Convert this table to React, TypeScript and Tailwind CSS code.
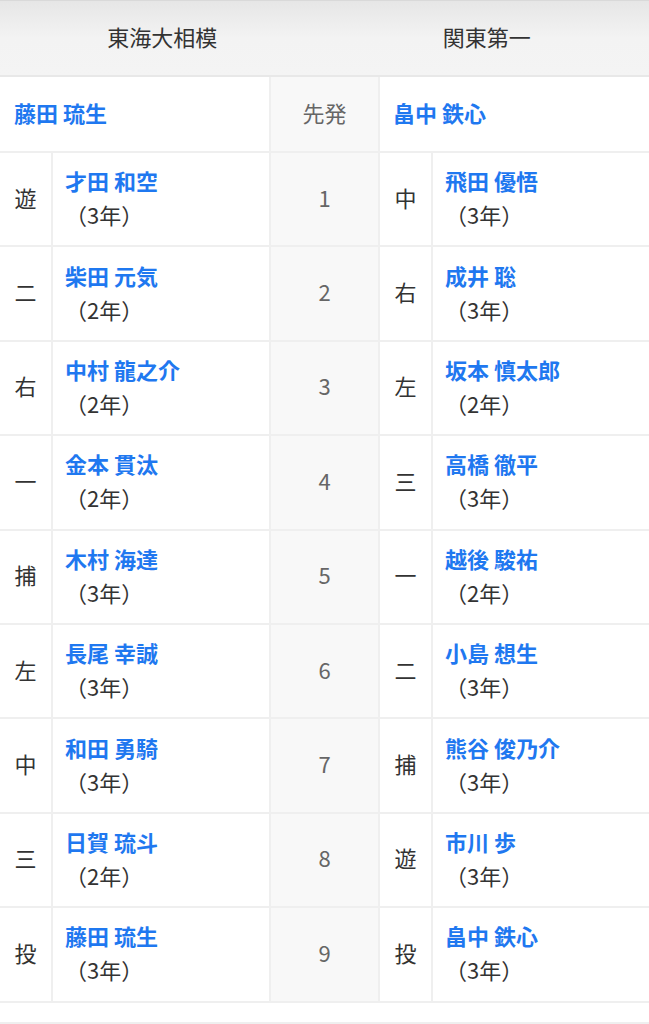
import React, { FC } from 'react';

interface IPlayer {
    pos: string;
    name: string;
    grade: string;
}

interface IRowProps {
    order: number;
    home: IPlayer;
    away: IPlayer;
}

const homeStarter = '藤田 琉生';
const awayStarter = '畠中 鉄心';

const home: IPlayer[] = [
    { pos: '遊', name: '才田 和空', grade: '3' },
    { pos: '二', name: '柴田 元気', grade: '2' },
    { pos: '右', name: '中村 龍之介', grade: '2' },
    { pos: '一', name: '金本 貫汰', grade: '2' },
    { pos: '捕', name: '木村 海達', grade: '3' },
    { pos: '左', name: '長尾 幸誠', grade: '3' },
    { pos: '中', name: '和田 勇騎', grade: '3' },
    { pos: '三', name: '日賀 琉斗', grade: '2' },
    { pos: '投', name: '藤田 琉生', grade: '3' },
];

const away: IPlayer[] = [
    { pos: '中', name: '飛田 優悟', grade: '3' },
    { pos: '右', name: '成井 聡', grade: '3' },
    { pos: '左', name: '坂本 慎太郎', grade: '2' },
    { pos: '三', name: '高橋 徹平', grade: '3' },
    { pos: '一', name: '越後 駿祐', grade: '2' },
    { pos: '二', name: '小島 想生', grade: '3' },
    { pos: '捕', name: '熊谷 俊乃介', grade: '3' },
    { pos: '遊', name: '市川 歩', grade: '3' },
    { pos: '投', name: '畠中 鉄心', grade: '3' },
];

const PlayerCells: FC<{ player: IPlayer }> = ({ player }) => (
    <>
        <div className="w-[51px] shrink-0 flex items-center justify-center pb-[4px] text-[#333]">
            {player.pos}
        </div>
        <div className="w-[2px] shrink-0 bg-[#efefef]"></div>
        <div className="flex-1 flex flex-col justify-center pl-[12px] pb-[4px] leading-[34px]">
            <span className="font-bold text-[#1f78f0]">{player.name}</span>
            <span className="text-[#333]">（{player.grade}年）</span>
        </div>
    </>
);

const Row: FC<IRowProps> = ({ order, home, away }) => (
    <div className="flex h-[92.4px] border-b-2 border-[#efefef] box-content">
        <div className="w-[269px] flex">
            <PlayerCells player={home} />
        </div>
        <div className="w-[2px] bg-[#efefef]"></div>
        <div className="w-[107px] bg-[#f8f8f8] flex items-center justify-center pb-[4px] text-[#666]">
            {order}
        </div>
        <div className="w-[2px] bg-[#efefef]"></div>
        <div className="flex-1 flex">
            <PlayerCells player={away} />
        </div>
    </div>
);

export default function App() {
    return (
        <div
            className="w-[649px] min-h-[1024px] bg-white text-[22px]"
            style={{ fontFamily: '"Noto Sans CJK JP", "Noto Sans", sans-serif' }}
        >
            <div className="flex h-[75px] border-t border-[#d9d9d9] bg-linear-to-b from-[#e6e6e6] via-[#f3f3f3] via-50% to-[#f4f4f4] text-[#333]">
                <div className="flex-1 flex items-center justify-center pb-[4px]">東海大相模</div>
                <div className="flex-1 flex items-center justify-center pb-[4px]">関東第一</div>
            </div>
            <div className="h-[2px] bg-[#e8e8e8]"></div>

            <div className="flex h-[74px] border-b-2 border-[#efefef] box-content">
                <div className="w-[269px] flex items-center pl-[14px] pb-[4px] font-bold text-[#1f78f0]">
                    {homeStarter}
                </div>
                <div className="w-[2px] bg-[#efefef]"></div>
                <div className="w-[107px] bg-[#f8f8f8] flex items-center justify-center pb-[4px] text-[#666]">
                    先発
                </div>
                <div className="w-[2px] bg-[#efefef]"></div>
                <div className="flex-1 flex items-center pl-[13px] pb-[4px] font-bold text-[#1f78f0]">
                    {awayStarter}
                </div>
            </div>

            {home.map((p, i) => (
                <Row key={i} order={i + 1} home={p} away={away[i]} />
            ))}

            <div className="h-[19px]"></div>
            <div className="h-[2px] bg-[#efefef]"></div>
        </div>
    );
}
